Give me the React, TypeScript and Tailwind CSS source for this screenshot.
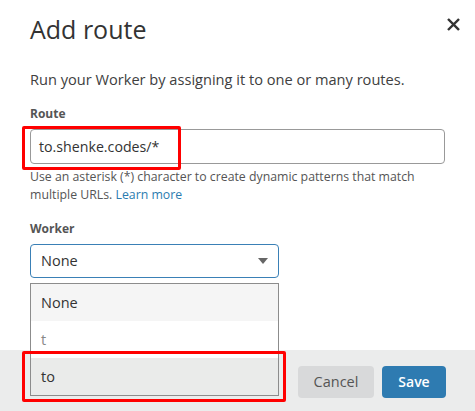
export default function App() {
  return (
    <div className="relative h-[411px] w-[475px] overflow-hidden bg-white font-['Open_Sans',sans-serif] text-[#333]">
      {/* body */}
      <div className="h-[350px] px-[30px] pt-[12px]">
        <div className="flex items-start justify-between">
          <h1 className="h-[34px] text-[25px] leading-[34px] font-normal text-[#333]">Add route</h1>
          <button className="mr-[-15px] mt-[5px] flex h-[14px] w-[14px] items-center justify-center text-[#333]">
            <svg viewBox="0 0 14 14" className="h-[13px] w-[13px]">
              <path d="M2 2 L12 12 M12 2 L2 12" stroke="currentColor" strokeWidth="2.6" strokeLinecap="square" />
            </svg>
          </button>
        </div>

        <p className="mt-[22px] text-[14.6px] leading-[22px] text-[#404040]">
          Run your Worker by assigning it to one or many routes.
        </p>

        {/* route */}
        <label className="mt-[15px] block text-[12px] leading-[18px] font-bold text-[#555]">Route</label>
        <div className="relative mt-[6px]">
          <div className="flex h-[35px] items-center rounded-[4px] border border-[#999] px-[8px] text-[14.2px] text-[#333]">
            to.shenke.codes/*
          </div>
          {/* annotation */}
          <div className="absolute left-[-8px] top-[-3px] h-[44px] w-[159px] rounded-[2px] border-[3px] border-[#f00]" />
        </div>
        <p className="mt-[4px] text-[12.3px] leading-[18px] text-[#555]">
          Use an asterisk (*) character to create dynamic patterns that match multiple URLs.{" "}
          <a className="text-[#2c7cb0]">Learn more</a>
        </p>

        {/* worker */}
        <label className="mt-[16px] block text-[12px] leading-[18px] font-bold text-[#555]">Worker</label>
        <div className="relative z-10 mt-[6px] w-[249px]">
          <div className="flex h-[34px] items-center justify-between rounded-[4px] border border-[#3a80b6] pl-[10px] pr-[10px] text-[14.5px] text-[#333]">
            <span>None</span>
            <svg viewBox="0 0 10 6" className="h-[6px] w-[10px] text-[#666]">
              <path d="M0 0 L10 0 L5 6 Z" fill="currentColor" />
            </svg>
          </div>

          {/* options */}
          <div className="absolute left-0 top-full mt-[5px] w-full">
            <ul className="border border-[#8c8c8c] text-[14.5px]">
              <li className="flex h-[37px] items-center bg-[#f5f5f5] px-[10px] text-[#333]">None</li>
              <li className="flex h-[37px] items-center bg-white px-[10px] text-[#888]">t</li>
              <li className="flex h-[37px] items-center bg-[#eaebea] px-[10px] text-[#333]">to</li>
            </ul>
            <div className="absolute left-[-8px] top-[68px] h-[51px] w-[264px] rounded-[2px] border-[3px] border-[#f00]" />
          </div>
        </div>
      </div>

      {/* footer */}
      <div className="flex h-[61px] items-center justify-end gap-[8px] bg-[#ebecec] pr-[29px] pt-[2px]">
        <button className="h-[32px] w-[76px] rounded-[4px] bg-[#d8d9da] text-[14.5px] text-[#555]">Cancel</button>
        <button className="h-[32px] w-[64px] rounded-[4px] bg-[#2e7bb1] text-[14px] font-semibold text-white">Save</button>
      </div>
    </div>
  );
}
